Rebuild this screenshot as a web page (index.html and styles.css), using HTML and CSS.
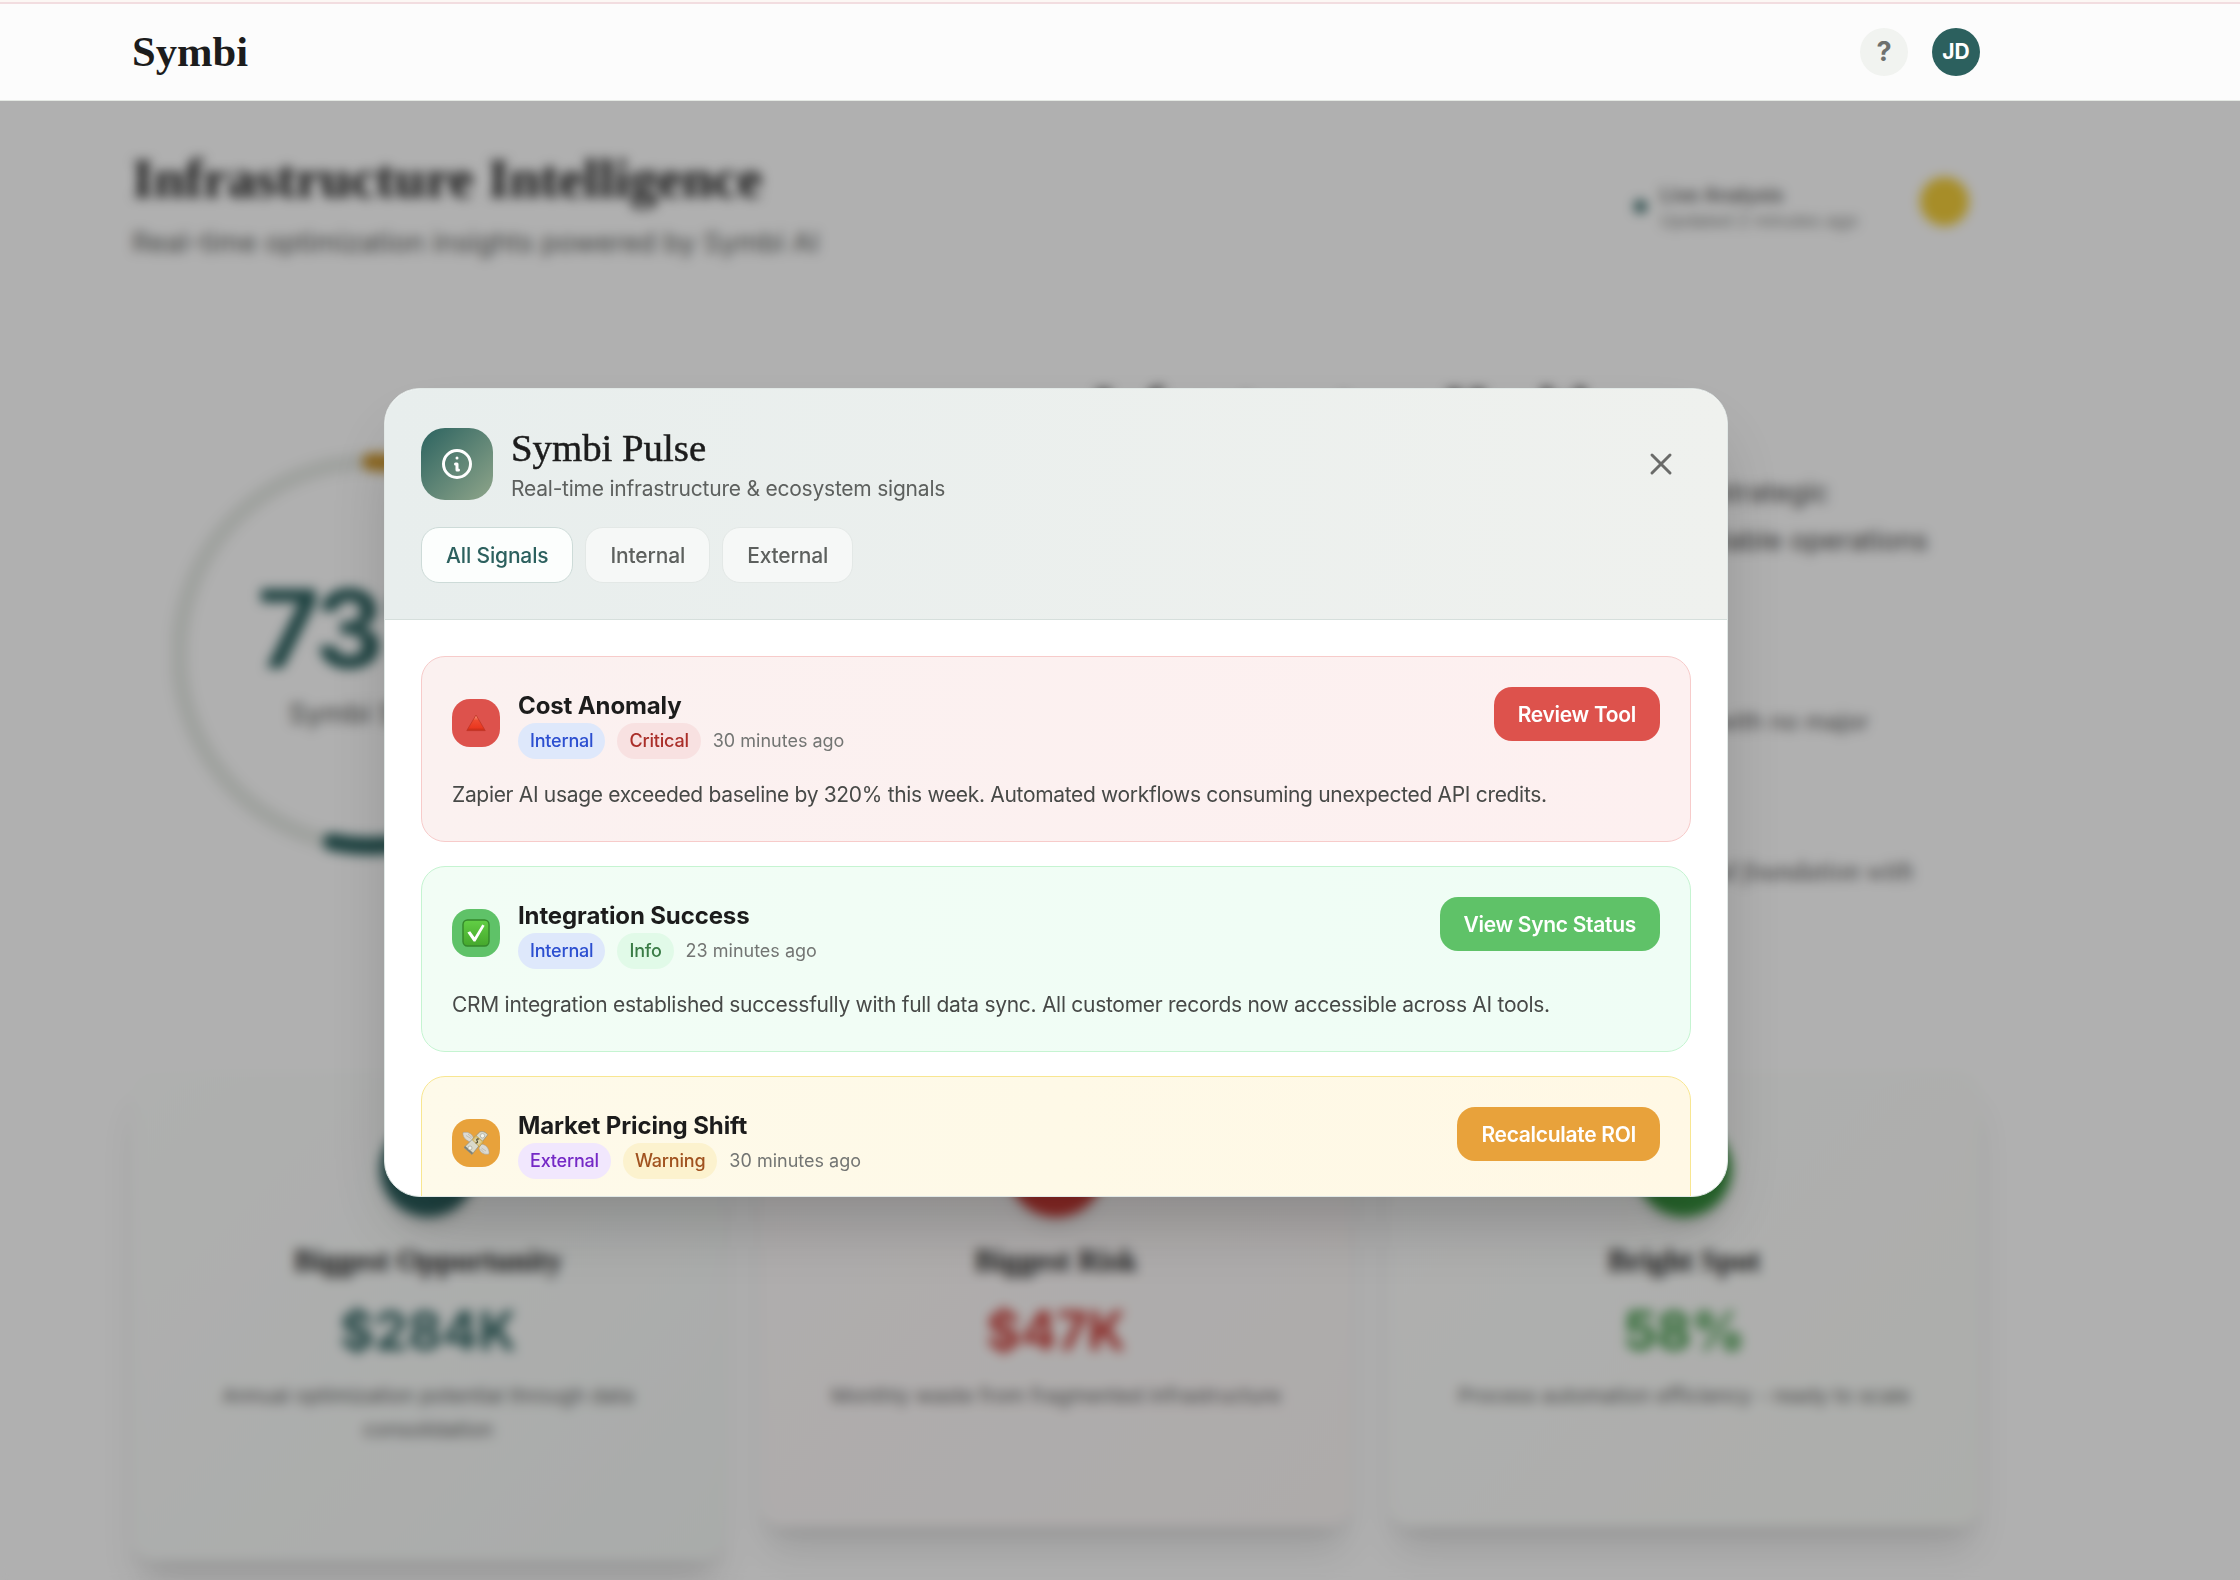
FILE: index.html
```html
<!DOCTYPE html>
<html lang="en">
<head>
<meta charset="utf-8">
<title>Symbi</title>
<link rel="stylesheet" href="styles.css">
</head>
<body>
<header class="topbar">
  <div class="logo">Symbi</div>
  <div class="topbar-actions">
    <button class="round help">?</button>
    <div class="round avatar">JD</div>
  </div>
</header>

<main class="page">
  <section class="intro">
    <div>
      <h1 class="intro-title">Infrastructure Intelligence</h1>
      <p class="intro-sub">Real-time optimization insights powered by Symbi AI</p>
    </div>
    <div class="intro-side">
      <div class="live">
        <span class="live-dot"></span>
        <div>
          <div class="live-title">Live Analysis</div>
          <div class="live-time">Updated 2 minutes ago</div>
        </div>
      </div>
      <div class="sun"></div>
    </div>
  </section>

  <section class="hero">
    <div class="score">
      <svg class="ring" viewBox="0 0 402 402">
        <defs>
          <linearGradient id="ringFill" x1="0" y1="0" x2="0" y2="1">
            <stop offset="0" stop-color="#c9932b"/>
            <stop offset="0.6" stop-color="#2c605e"/>
          </linearGradient>
        </defs>
        <circle cx="200" cy="201" r="192" fill="none" stroke="#e6e9e5" stroke-width="18"/>
        <path d="M200 9A192 192 0 1 1 161 389" fill="none" stroke="url(#ringFill)" stroke-width="18" stroke-linecap="round"/>
      </svg>
      <div class="score-text">
        <div class="score-value">73%</div>
        <div class="score-label">Symbi Score</div>
      </div>
    </div>
    <div class="copy">
      <h2 class="copy-title">Infrastructure Health</h2>
      <p class="copy-lead">Solid foundation that is ready for strategic</p>
      <p class="copy-lead wide">growth across scalable operations</p>
      <p class="copy-note">Systems are stable with no major</p>
      <p class="copy-quote">You have built a good foundation with</p>
    </div>
  </section>

  <section class="stats">
    <article class="stat teal">
      <div class="stat-icon"></div>
      <h3 class="stat-title">Biggest Opportunity</h3>
      <div class="stat-value">$284K</div>
      <p class="stat-text">Annual optimization potential through data consolidation</p>
    </article>
    <article class="stat red">
      <div class="stat-icon"></div>
      <h3 class="stat-title">Biggest Risk</h3>
      <div class="stat-value">$47K</div>
      <p class="stat-text">Monthly waste from fragmented infrastructure</p>
    </article>
    <article class="stat green">
      <div class="stat-icon"></div>
      <h3 class="stat-title">Bright Spot</h3>
      <div class="stat-value">58%</div>
      <p class="stat-text">Process automation efficiency - ready to scale</p>
    </article>
  </section>
</main>

<div class="overlay">
  <div class="modal">
    <div class="modal-head">
      <div class="modal-row">
        <div class="modal-icon">
          <svg width="36" height="36" viewBox="0 0 24 24" fill="none" stroke="#fff" stroke-width="2" stroke-linecap="round" stroke-linejoin="round"><path d="M13 16h-1v-4h-1m1-4h.01M21 12a9 9 0 11-18 0 9 9 0 0118 0z"/></svg>
        </div>
        <div class="modal-titles">
          <h2 class="modal-title">Symbi Pulse</h2>
          <p class="modal-sub">Real-time infrastructure &amp; ecosystem signals</p>
        </div>
        <button class="close" aria-label="Close">
          <svg width="36" height="36" viewBox="0 0 24 24" fill="none" stroke="#6a6b69" stroke-width="2" stroke-linecap="round"><path d="M6 18L18 6M6 6l12 12"/></svg>
        </button>
      </div>
      <div class="tabs">
        <button class="tab active">All Signals</button>
        <button class="tab">Internal</button>
        <button class="tab">External</button>
      </div>
    </div>
    <div class="modal-body">
      <article class="signal critical">
        <div class="signal-top">
          <div class="signal-icon">
            <svg width="20" height="18" viewBox="0 0 20 18">
              <defs><linearGradient id="tri" x1="0" y1="0" x2="0" y2="1"><stop offset="0" stop-color="#f8a890"/><stop offset="0.35" stop-color="#ee4a30"/><stop offset="0.8" stop-color="#ea3820"/><stop offset="1" stop-color="#c02c19"/></linearGradient></defs>
              <path d="M10 1L19.200 16.600H0.800z" fill="url(#tri)" stroke="#c03324" stroke-width="0.800" stroke-linejoin="round"/>
            </svg>
          </div>
          <div class="signal-info">
            <h3 class="signal-title">Cost Anomaly</h3>
            <div class="meta"><span class="badge internal">Internal</span><span class="badge level">Critical</span><span class="time">30 minutes ago</span></div>
          </div>
          <button class="action">Review Tool</button>
        </div>
        <p class="signal-text">Zapier AI usage exceeded baseline by 320% this week. Automated workflows consuming unexpected API credits.</p>
      </article>
      <article class="signal success">
        <div class="signal-top">
          <div class="signal-icon">
            <svg width="28" height="28" viewBox="0 0 28 28">
              <defs><linearGradient id="chk" x1="0" y1="0" x2="0" y2="1"><stop offset="0" stop-color="#62cf45"/><stop offset="1" stop-color="#45a72c"/></linearGradient></defs>
              <rect x="1" y="1" width="26" height="26" rx="4.500" fill="url(#chk)" stroke="#34882a" stroke-width="1.400"/>
              <path d="M5.400 13.600l2.800-1.300 4.400 5.900L20.300 5.600l2.300 1.200-9.200 15.800h-1.800z" fill="#fff"/>
            </svg>
          </div>
          <div class="signal-info">
            <h3 class="signal-title">Integration Success</h3>
            <div class="meta"><span class="badge internal">Internal</span><span class="badge level">Info</span><span class="time">23 minutes ago</span></div>
          </div>
          <button class="action">View Sync Status</button>
        </div>
        <p class="signal-text loose">CRM integration established successfully with full data sync. All customer records now accessible across AI tools.</p>
      </article>
      <article class="signal warning">
        <div class="signal-top">
          <div class="signal-icon">
            <svg width="28" height="28" viewBox="0 0 28 28">
              <path d="M1 3.500c2 0 4-.6 6 .4 2.500 1 4 3 4.500 5.500l-2 3.600c-2.500.2-3.500-1.500-5-2C2 9.500.5 6 1 3.500z" fill="#dcdad2" stroke="#a9a598" stroke-width=".6"/>
              <path d="M27 25c-2 .3-4 .4-6-.6-2.300-1.100-3.600-3-4-5.400l2-3.800c2.500-.2 4 1 5.300 2C26.500 19.500 27.500 22.500 27 25z" fill="#dcdad2" stroke="#a9a598" stroke-width=".6"/>
              <path d="M2 18.500L17.500 3.200c2.500-1.400 6-.4 8.200 2.600L10 25.500z" fill="#d9d9ca" stroke="#8c8d80" stroke-width=".7"/>
              <path d="M2 18.500l8 7 1.200-1.600-8-6.800z" fill="#7f8174"/>
              <circle cx="20.500" cy="6.800" r="2.200" fill="#f4f4ec" stroke="#9a9b8d" stroke-width=".6"/>
              <circle cx="8" cy="19" r="2" fill="#f4f4ec" stroke="#9a9b8d" stroke-width=".6"/>
              <path d="M10 10.600l4-4 7.400 6.200-4 5z" fill="#e2c066" stroke="#a98a3a" stroke-width=".5"/>
              <path d="M11.600 11.200l2.900-2.800 4.800 4.200-2.800 3.300z" fill="#d7cfa6"/>
              <path d="M16.800 10.200c-1.500-.8-2.700.4-1.700 1.600s.2 2.600-1.500 1.900" fill="none" stroke="#4f4a32" stroke-width="1.100"/>
              <path d="M4 6.500l5 3M6 5l4 3.500M24 22l-4.500-3M22 23.500L18.500 20" stroke="#b5b1a4" stroke-width=".7"/>
            </svg>
          </div>
          <div class="signal-info">
            <h3 class="signal-title">Market Pricing Shift</h3>
            <div class="meta"><span class="badge external">External</span><span class="badge level">Warning</span><span class="time">30 minutes ago</span></div>
          </div>
          <button class="action">Recalculate ROI</button>
        </div>
      </article>
    </div>
  </div>
</div>
</body>
</html>
```

FILE: styles.css
```css
* { box-sizing: border-box; margin: 0; padding: 0; }

html, body { height: 1580px; overflow: hidden; }

body {
  position: relative;
  background: #fcfcfc;
  color: #1c1c1c;
  font-family: Inter, "Liberation Sans", sans-serif;
}

button { border: 0; background: none; font-family: inherit; }

/* top bar */
.topbar {
  position: relative;
  z-index: 20;
  display: flex;
  align-items: center;
  justify-content: space-between;
  height: 101px;
  padding: 3px 260px 0 132px;
  background: linear-gradient(#fcf7f4 2px, #f2dde0 2px, #f2dde0 4px, #fcfcfc 4px);
  border-bottom: 1px solid #e4e8e3;
}
.logo {
  font: 700 42.6px/48px "Liberation Serif", serif;
}
.topbar-actions { display: flex; gap: 24px; }
.round {
  display: flex;
  align-items: center;
  justify-content: center;
  width: 48px;
  height: 48px;
  border-radius: 50%;
}
.help { background: #f1f3f0; color: #6e706e; font-size: 27px; font-weight: 700; }
.avatar { background: #2c605e; color: #fff; font-size: 21px; font-weight: 700; }

/* page behind the dialog */
.page { padding: 44px 260px 0 132px; }
.intro { display: flex; justify-content: space-between; height: 118px; }
.intro-title { font: 700 55.6px/66px "Liberation Serif", serif; }
.intro-sub { margin-top: 11px; font-size: 27.7px; line-height: 40px; color: #5b5d5b; }
.intro-side { display: flex; gap: 62px; padding: 32px 11px 0 0; }
.live { display: flex; align-items: center; gap: 13px; height: 58px; }
.live-dot { width: 13px; height: 13px; border-radius: 50%; background: #2c605e; }
.live-title { padding-top: 3px; font-size: 19.7px; font-weight: 500; line-height: 26px; color: #4c4c4c; }
.live-time { font-size: 18px; line-height: 26px; color: #858785; }
.sun { width: 49px; height: 49px; border-radius: 50%; background: #f0cb3a; }

.hero { display: flex; justify-content: space-between; height: 707px; margin-top: 103px; }
.score { display: grid; width: 402px; height: 402px; margin: 87px 0 0 39px; }
.score > * { grid-area: 1 / 1; }
.ring { width: 402px; height: 402px; }
.score-text { text-align: center; padding-top: 110px; }
.score-value { font-size: 108px; font-weight: 700; line-height: 132px; letter-spacing: -3.5px; color: #2c605e; }
.score-label { font-size: 27.7px; font-weight: 500; line-height: 36px; color: #6a6c6a; }
.copy { width: 887px; padding-top: 6px; text-align: right; }
.copy-title { margin-bottom: 24px; font: 700 55px/72px "Liberation Serif", serif; text-align: left; }
.copy-lead { padding-right: 151px; font-size: 27.5px; line-height: 48px; color: #444; }
.copy-lead.wide { padding-right: 52px; }
.copy-note { margin-top: 140px; padding-right: 111px; font-size: 24px; line-height: 36px; color: #555; }
.copy-quote { margin-top: 113px; padding-right: 67px; font: italic 27px/36px "Liberation Serif", serif; color: #555; }

.stats { display: grid; grid-template-columns: repeat(3, 1fr); gap: 36px; align-items: start; }
.stat {
  display: flex;
  flex-direction: column;
  align-items: center;
  padding: 48px 60px 114px;
  border-radius: 24px;
  text-align: center;
  box-shadow: 0 30px 37px -7px rgba(0, 0, 0, .1), 0 12px 15px -9px rgba(0, 0, 0, .1);
}
.stat.teal { background: linear-gradient(135deg, #fbfcfb, #f3f6f4); --tone: #2c605e; }
.stat.red { background: linear-gradient(135deg, #fcf9f9, #f9f5f4); --tone: #c73a35; }
.stat.green { background: linear-gradient(135deg, #fcfcfc, #f7f9f5); --tone: #38933f; }
.stat-icon { width: 96px; height: 96px; border-radius: 50%; background: var(--tone); box-shadow: 0 12px 15px -3px rgba(0, 0, 0, .1); }
.stat-title { margin-top: 26px; font: 700 30.7px/36px "Liberation Serif", serif; }
.stat-value { margin-top: 18px; font-size: 53px; font-weight: 700; line-height: 68px; color: var(--tone); }
.stat-text { margin-top: 14px; font-size: 20.6px; line-height: 34px; color: #666; }

/* dialog */
.overlay {
  position: absolute;
  inset: 0;
  z-index: 10;
  display: flex;
  align-items: flex-start;
  padding: 388px 0 0 384px;
  background: rgba(0, 0, 0, .3);
  backdrop-filter: blur(6px);
}
.modal {
  display: flex;
  flex-direction: column;
  width: 1344px;
  height: 809px;
  overflow: hidden;
  border: 1px solid #e1e8e6;
  border-radius: 36px;
  background: #fff;
  box-shadow: 0 37px 75px -18px rgba(0, 0, 0, .25);
}
.modal-head {
  flex: none;
  height: 231px;
  padding: 36px;
  background: linear-gradient(90deg, #e8eeed, #eff1ee);
  border-bottom: 1px solid #d6dfdc;
}
.modal-row { display: flex; align-items: center; height: 78px; margin-bottom: 24px; }
.modal-icon {
  display: flex;
  align-items: center;
  justify-content: center;
  width: 72px;
  height: 72px;
  border-radius: 24px;
  background: linear-gradient(135deg, #2c6360, #8fa58a);
}
.modal-titles { flex: 1; margin-left: 18px; }
.modal-title { font: 400 38.8px/46px "Liberation Serif", serif; -webkit-text-stroke: .5px #1c1c1c; }
.modal-sub { padding-top: 3px; font-size: 21px; line-height: 30px; letter-spacing: -.22px; color: #5d605e; }
.close { display: flex; padding: 12px; }

.tabs { display: flex; gap: 12px; }
.tab {
  height: 56px;
  padding: 0 24px;
  border: 1px solid #e3e8e6;
  border-radius: 18px;
  background: #f6f8f7;
  color: #5d605e;
  font-size: 21px;
  font-weight: 500;
  letter-spacing: -.15px;
}
.tab.active { border-color: #cddbd8; background: #fcfefd; color: #2c605e; }

.modal-body { display: flex; flex-direction: column; gap: 24px; padding: 36px; }
.signal {
  flex: none;
  height: 186px;
  padding: 30px;
  border: 1px solid var(--line);
  border-radius: 24px;
}
.critical { --line: #f7cbca; --tone: #dd524c; background: linear-gradient(90deg, #fbf1f0, #fdf0f0); }
.success { --line: #c5f4d1; --tone: #5fc268; background: linear-gradient(90deg, #f2fdf5, #effdf5); }
.warning { --line: #f8e691; --tone: #e8a23b; background: linear-gradient(90deg, #fefaea, #fef9e7 50%, #fff8e5); }
.signal-top { display: flex; align-items: flex-start; height: 72px; margin-bottom: 19px; }
.signal-icon {
  display: flex;
  align-items: center;
  justify-content: center;
  width: 48px;
  height: 48px;
  margin-top: 12px;
  border-radius: 18px;
  background: var(--tone);
}
.signal-info { flex: 1; margin-left: 18px; }
.signal-title { height: 36px; padding-top: 1px; font-size: 24px; font-weight: 700; line-height: 36px; letter-spacing: -.12px; }
.meta { display: flex; align-items: center; gap: 12px; }
.badge { height: 36px; padding: 0 12px; border-radius: 18px; font-size: 18px; font-weight: 450; line-height: 35px; letter-spacing: -.2px; }
.badge.internal { background: #dee8fb; color: #2c4fd0; }
.badge.external { background: #f1e7fd; color: #7529c6; }
.critical .level { background: #f8e1e1; color: #aa2e29; }
.success .level { background: #e1fae8; color: #3a7c46; }
.warning .level { background: #fcf2ce; color: #a0521f; }
.time { font-size: 18px; line-height: 34px; color: #737573; }
.action {
  height: 54px;
  padding: 0 24px;
  border-radius: 18px;
  background: var(--tone);
  color: #fff;
  font-size: 21px;
  font-weight: 600;
  letter-spacing: -.3px;
}
.signal-text { font-size: 21px; line-height: 34px; letter-spacing: -.32px; white-space: nowrap; color: #474947; }
.signal-text.loose { letter-spacing: -.285px; }
```
